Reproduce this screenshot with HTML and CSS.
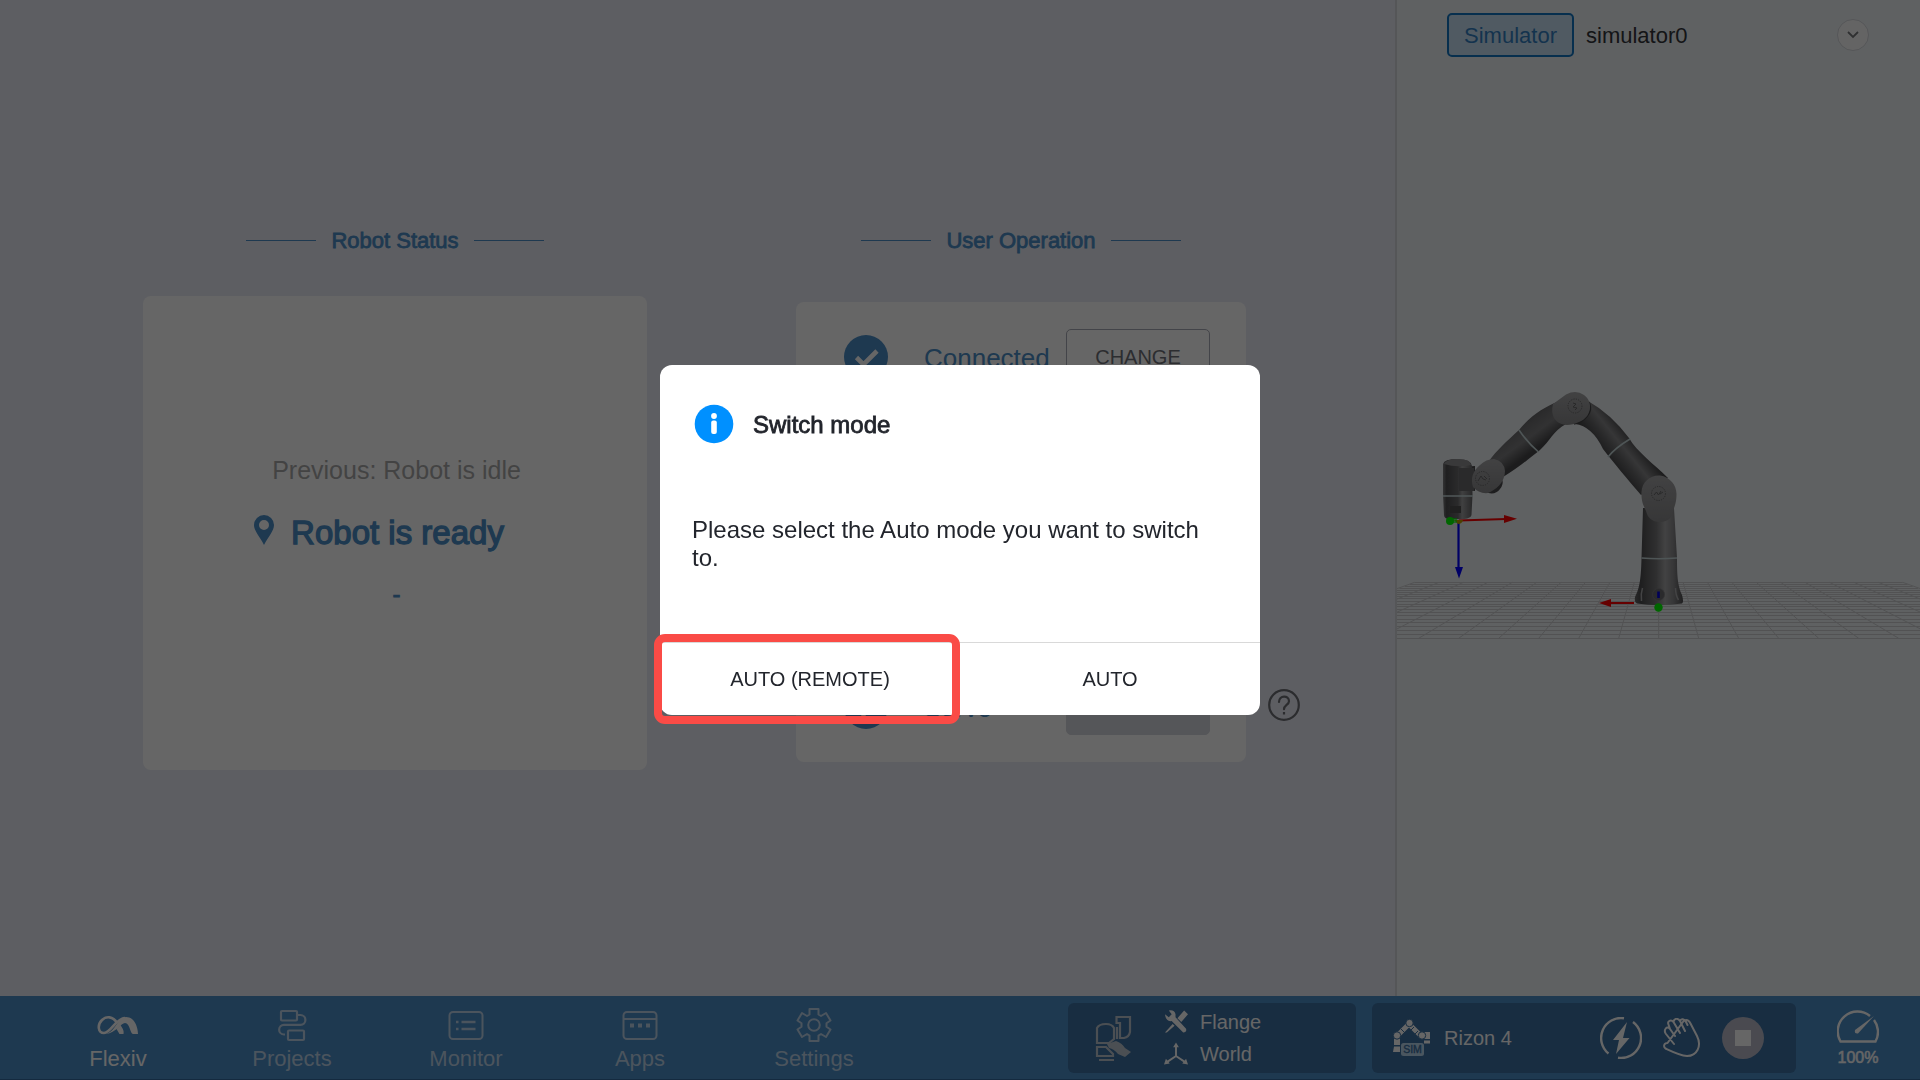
FILE: index.html
```html
<!DOCTYPE html>
<html lang="en">

<head>
  <meta charset="UTF-8">
  <meta name="viewport" content="width=device-width, initial-scale=1.0">
  <title>Flexiv Elements</title>
  <link rel="stylesheet" href="styles.css">
</head>

<body>
  <div class="content">
    <main class="main">
      <section class="status">
        <h2 class="title">Robot Status</h2>
        <div class="card statusCard">
          <p class="previous">Previous: Robot is idle</p>
          <p class="current">
            <svg class="pin" width="20" height="30" viewBox="0 0 20 30">
              <path fill="#4b8ec8" fill-rule="evenodd" d="M10 0a10 10 0 0 1 10 10c0 6-6 12-10 20C6 22 0 16 0 10A10 10 0 0 1 10 0zm0 5a5 5 0 1 0 0 10a5 5 0 0 0 0-10z" />
            </svg>
            <span>Robot is ready</span>
          </p>
          <p class="next">-</p>
        </div>
      </section>
      <section class="operation">
        <h2 class="title">User Operation</h2>
        <div class="card operationCard">
          <div class="row">
            <svg width="44" height="44" viewBox="0 0 44 44">
              <circle cx="22" cy="22" r="22" fill="#4b8ec8" />
              <path d="M12.500 22.500l7 7L33 16" fill="none" stroke="#fff" stroke-width="4.600" />
            </svg>
            <span class="rowText">Connected</span>
            <button type="button" class="rowBtn">CHANGE</button>
          </div>
          <div class="row">
            <svg width="44" height="44" viewBox="0 0 44 44">
              <circle cx="22" cy="22" r="22" fill="#4b8ec8" />
              <path d="M12.500 22.500l7 7L33 16" fill="none" stroke="#fff" stroke-width="4.600" />
            </svg>
            <span class="rowText">Servo</span>
            <button type="button" class="rowBtn disabled" disabled></button>
            <svg class="help" width="32" height="32" viewBox="0 0 32 32" fill="none" stroke="#6c6e74" stroke-width="2.200">
              <circle cx="16" cy="16" r="14.800" />
              <path d="M11 13c0-7 10-7 10-.8c0 3.600-5 4-5 8" stroke-linecap="round" />
              <path d="M16 23v2.500" />
            </svg>
          </div>
        </div>
      </section>
    </main>
    <aside class="side">
      <div class="sideHead">
        <span class="tag">Simulator</span>
        <span class="name">simulator0</span>
        <button type="button" class="fold">
          <svg width="12" height="8" viewBox="0 0 12 8"><path d="M1 1l5 5l5-5" fill="none" stroke="#77797c" stroke-width="1.800" /></svg>
        </button>
      </div>
      <svg class="scene" width="523" height="924" viewBox="1397 72 523 924">
        <defs>
          <linearGradient id="up" x1="0" x2="1" y1="0" y2="0">
            <stop offset="0" stop-color="#646466" />
            <stop offset=".12" stop-color="#4c4c4e" />
            <stop offset=".45" stop-color="#777779" />
            <stop offset=".63" stop-color="#a6a6a8" />
            <stop offset=".8" stop-color="#89898b" />
            <stop offset="1" stop-color="#505052" />
          </linearGradient>
          <linearGradient id="head" x1="0" x2="1" y1="0" y2="0">
            <stop offset="0" stop-color="#808082" />
            <stop offset=".12" stop-color="#505052" />
            <stop offset=".5" stop-color="#69696b" />
            <stop offset=".65" stop-color="#a0a0a2" />
            <stop offset="1" stop-color="#646466" />
          </linearGradient>
          <linearGradient id="armL" gradientUnits="userSpaceOnUse" x1="1512" y1="420" x2="1534" y2="450">
            <stop offset="0" stop-color="#555557" />
            <stop offset=".35" stop-color="#6e6e70" />
            <stop offset=".65" stop-color="#7d7d7f" />
            <stop offset="1" stop-color="#48484a" />
          </linearGradient>
          <linearGradient id="armR" gradientUnits="userSpaceOnUse" x1="1604" y1="455" x2="1630" y2="434">
            <stop offset="0" stop-color="#444446" />
            <stop offset=".35" stop-color="#68686a" />
            <stop offset=".6" stop-color="#88888a" />
            <stop offset="1" stop-color="#48484a" />
          </linearGradient>
          <linearGradient id="cap" x1="0" x2="0" y1="0" y2="1">
            <stop offset="0" stop-color="#a5a5a7" />
            <stop offset="1" stop-color="#89898b" />
          </linearGradient>
        </defs>
        <g id="grid" stroke="#ccced0" stroke-width="1"></g>

        <!-- base and lower column -->
        <path fill="url(#up)" d="M1643 508L1641.500 558C1641 582 1639 589 1635 597Q1634 602 1637 603.500Q1659 607 1682 603.500Q1684 602 1682 595C1678 586 1677 578 1677 558L1674 508z" />
        <path d="M1641.500 558q17 1.500 35.500 0" fill="none" stroke="#c3d4d6" stroke-width="1.600" />
        <path d="M1642.500 588q-2 6-1 13M1675.500 588q0 7 3 12" fill="none" stroke="#a8a8aa" stroke-width="1.500" />
        <circle cx="1658.500" cy="594.500" r="6" fill="#6a6a6e" stroke="#7c7c80" stroke-width=".8" />
        <path d="M1658.500 591.500v6.500" stroke="#0000e0" stroke-width="2.600" />

        <!-- upper right link -->
        <path fill="url(#armR)" d="M1588 401Q1611 414 1629 438C1637 452 1654 464 1668 478L1641 495C1628 480 1614 463 1603 449Q1592 426 1575 424L1565 420z" />
        <path d="M1608 457Q1615 448 1630 439" fill="none" stroke="#c3d4d6" stroke-width="1.600" />
        <path fill="url(#cap)" d="M1660 475.500C1670 477 1676.500 485 1676.500 494C1676.500 505 1673 509 1672 515C1669 524 1651 525 1647 514C1645 507 1641 504 1641.500 492C1642 482 1650 475 1660 475.500z" />
        <circle cx="1658.500" cy="493.500" r="7" fill="none" stroke="#666668" stroke-width="1" stroke-dasharray="1.200 1.200" />
        <path d="M1654 495l2.500-3l2 3l2.500-4M1660 494l3-2" fill="none" stroke="#666668" />

        <!-- upper left link -->
        <path fill="url(#armL)" d="M1557 402C1546 406 1530 416 1519 430C1508 440 1496 451 1489 461L1503 477C1518 468 1530 458 1540 450C1550 441 1553 431 1566 424z" />
        <path d="M1519 430Q1527 442 1538.500 452" fill="none" stroke="#c3d4d6" stroke-width="1.600" />
        <path d="M1589 402q5 10-7 19l-8 3" fill="none" stroke="#444446" stroke-width="1.500" />
        <path fill="url(#cap)" d="M1566 394.500Q1576 389.500 1584 395C1594 402 1591 418 1579 422C1570 426 1560 427 1554 418Q1551 412 1553 404z" />
        <circle cx="1575" cy="406" r="7" fill="none" stroke="#666668" stroke-dasharray="1.200 1.200" />
        <path d="M1573 403l3 1l-3 3l4 1l-2 2" fill="none" stroke="#666668" />

        <!-- wrist -->
        <path fill="#4c4c4e" d="M1458 467L1475 466V491L1458 490zM1485 492q10 4 15-3q4-5 2-10z" />
        <path fill="url(#head)" d="M1443 464Q1444 459 1458 459Q1471 459 1472 466L1472.500 495L1471.500 515Q1471 518 1464 519H1448Q1444 518 1444 515L1443 495z" />
        <path fill="#69696b" d="M1459 468h15v23h-15z" />
        <path fill="#909092" d="M1444 464q2-5 14-5q12 0 13 6q-14 3-27-1z" />
        <path d="M1443 496h30" stroke="#c3d4d6" stroke-width="1.600" />
        <path fill="#505052" d="M1450 506h11v7h-11z" />
        <path fill="url(#cap)" d="M1480 465Q1486 459 1494 459Q1504 461 1505 471C1505 483 1495 490 1488 493Q1479 494 1473 487Q1469 474 1480 465z" />
        <circle cx="1482.500" cy="478.500" r="7" fill="none" stroke="#666668" stroke-dasharray="1.200 1.200" />
        <path d="M1478 481l3-5l2 3l3 1M1484 476l3 3" fill="none" stroke="#666668" />

        <!-- coordinate axes -->
        <path d="M1459 520.500L1506 519" stroke="#f00" stroke-width="2" />
        <path fill="#f00" d="M1504 515l13 3.800l-13 4.200zM1611 599l-12 4l12 4z" />
        <path d="M1610 603h24" stroke="#f00" stroke-width="2" />
        <path d="M1458.500 523v45" stroke="#00f" stroke-width="2.200" />
        <path fill="#00f" d="M1455 567h8l-4 11.500z" />
        <path fill="#c0a000" d="M1454 520h9q-1 4-5 4z" />
        <circle cx="1450" cy="521" r="4" fill="#0f0" />
        <path fill="#0f0" d="M1450 518h7v5h-7z" opacity=".6" />
        <circle cx="1658.500" cy="607.500" r="4.200" fill="#0f0" />
      </svg>
    </aside>
  </div>

  <nav class="nav">
    <ul class="menu">
      <li class="menuItem active">
        <svg width="42" height="34" viewBox="0 0 42 34">
          <path d="M20 15C16 8 9 8 5 12C0 17 1 25 7 25C14 25 19 10 28 10" fill="none" stroke="#fff" stroke-width="2.600" />
          <path d="M13 24C19 20 22 9 29 9C38 9 41 20 41 26H36C33 26 33 15 28 15C24 15 19 25 9 26z" fill="#fff" />
          <path d="M19.500 21l4-4c1 2 4 5 3 9h-4z" fill="#fff" />
        </svg>
        <span>Flexiv</span>
      </li>
      <li class="menuItem">
        <svg width="34" height="34" viewBox="0 0 34 34" fill="none" stroke="#bbd3e8" stroke-width="2.200">
          <rect x="6" y="3" width="16" height="9.500" rx="1" />
          <rect x="13" y="22.500" width="16" height="9.500" rx="1" />
          <path d="M22 7h3.500a4.700 4.700 0 0 1 0 9.800H9a4.800 4.800 0 0 0 0 9.700h1" />
        </svg>
        <span>Projects</span>
      </li>
      <li class="menuItem">
        <svg width="36" height="34" viewBox="0 0 36 34" fill="none" stroke="#bbd3e8" stroke-width="2">
          <rect x="1.500" y="4" width="33" height="27" rx="3.500" />
          <path d="M8 14h2.500M13.500 14h14M8 21h2.500M13.500 21h14" stroke-width="2.400" />
        </svg>
        <span>Monitor</span>
      </li>
      <li class="menuItem">
        <svg width="36" height="34" viewBox="0 0 36 34" fill="none" stroke="#bbd3e8" stroke-width="2">
          <rect x="1.500" y="4" width="33" height="27" rx="3.500" />
          <path d="M2 11h32" />
          <path d="M8 17.500h4M16 17.500h4M24 17.500h4" stroke-width="4" />
        </svg>
        <span>Apps</span>
      </li>
      <li class="menuItem">
        <svg width="36" height="36" viewBox="0 0 36 36" fill="none" stroke="#bbd3e8" stroke-width="2" stroke-linejoin="round">
          <path d="M13.500 2h9v5.500l2.500 1.500l5-3l4.500 7.500l-4 2.800v3.400l4 2.800l-4.500 7.500l-5-3l-2.500 1.500V34h-9v-5.500L11 27l-5 3l-4.500-7.500l4-2.800v-3.400l-4-2.800L6 6l5 3l2.500-1.500z" />
          <circle cx="18" cy="18" r="5.800" />
        </svg>
        <span>Settings</span>
      </li>
    </ul>
    <div class="panel frame">
      <svg width="38" height="46" viewBox="0 0 38 46" fill="none" stroke="#bcc6d0" stroke-width="2.200">
        <path d="M3 28V13q2-4 9-4q6 0 8 4v11l-5 4z" />
        <path d="M22.500 2h13.500v15q-1 5-6 6h-4V8h-3.500z" />
        <path d="M23 12v12" />
        <path d="M3 32h9l7 7v2H3zM5 45h15" />
        <path d="M13 29l9-3q6 2 9 7l6 4l-6 5l-7-3q-4-5-9-6z" fill="#bcc6d0" stroke="none" />
      </svg>
      <ul class="frameList">
        <li class="frameItem">
          <svg width="24" height="24" viewBox="0 0 25 24">
            <path d="M1 4l4 3l3-3l-3-4q6-1 7 4v3l11 12q1 4-3 4L8 11q-6 1-7-7z" fill="#fff" />
            <path d="M14 8l7-8l4 4l-7 8zM9 14l2 2l-8 7H1z" fill="#fff" />
          </svg>
          <span>Flange</span>
        </li>
        <li class="frameItem">
          <svg width="24" height="24" viewBox="0 0 25 24">
            <path d="M12.500 3v11L3 20.500M12.500 14l9.500 6.500" fill="none" stroke="#fff" stroke-width="2" />
            <path d="M9.500 5l3-5l3 5zM0 23l2-6l4 5zM25 23l-2-6l-4 5z" fill="#fff" />
          </svg>
          <span>World</span>
        </li>
      </ul>
    </div>
    <div class="panel robot">
      <svg width="40" height="38" viewBox="0 0 40 38">
        <path d="M5 17L17 5l12 12" fill="none" stroke="#fff" stroke-width="5" />
        <path d="M2 19h6v7H2zM2 27.500h6V33H1zM32 13h6v7h-6zM32 21.500h6v3h-6z" fill="#fff" />
        <path d="M9 10l4 4M22 8l-4 4M26 12l-4 4" stroke="#3c70a2" />
        <g fill="#fff" stroke="#3c70a2" stroke-width="1">
          <circle cx="17.500" cy="4" r="3.700" />
          <circle cx="5" cy="16.500" r="3.700" />
          <circle cx="30" cy="16.500" r="3.700" />
        </g>
        <rect x="9" y="24" width="23" height="13" rx="2.500" fill="#b8d6ee" />
        <text class="sim" x="20.500" y="34.200" text-anchor="middle">SIM</text>
      </svg>
      <span class="robotName">Rizon 4</span>
      <svg class="power" width="42" height="42" viewBox="0 0 42 42" fill="none" stroke="#fff" stroke-width="2.400">
        <path d="M24 1.200A20 20 0 0 0 8.500 36.500M33 5A20 20 0 0 1 18 40.800" />
        <path d="M27 5L13 23h6L16 37L29.500 21H23z" fill="#fff" stroke="none" />
      </svg>
      <svg class="hand" width="38" height="40" viewBox="0 0 38 40" fill="none" stroke="#fff" stroke-width="2" stroke-linecap="round" stroke-linejoin="round">
        <path d="M11 26L3 16C0 12 4 7 7 11L12 18M7 11L5.500 6.500C4 3 8 1 10.500 4L17 15M10.500 4C11 0 15 0 17 3L22 13M17 3C18 0 21.500 1 23 4L24.500 7M21 2.500C24 1 26 2.500 27.500 5.500L34 18C39 28 34 38 24 38C17 37.500 12 35 2.500 30.500C0 28.500 1 25 4.500 25z" />
      </svg>
      <svg class="stop" width="42" height="42" viewBox="0 0 42 42">
        <circle cx="21" cy="21" r="21" fill="#b8bac8" />
        <rect x="13" y="13" width="16" height="16" fill="#fff" />
      </svg>
    </div>
    <div class="speed">
      <svg width="42" height="34" viewBox="0 0 42 34" fill="none" stroke="#fff" stroke-width="2.400">
        <path d="M33 6A19.800 19.800 0 0 0 3.500 31.500h35A19.800 19.800 0 0 0 37 10" />
        <path d="M37 6L18 20q-1 4 3 3.500z" fill="#fff" stroke="none" />
      </svg>
      <span>100%</span>
    </div>
  </nav>

  <div class="mask">
    <div class="dialog">
      <div class="dialogHead">
        <svg width="40" height="40" viewBox="0 0 40 40">
          <circle cx="20" cy="20" r="19.300" fill="#0090ff" />
          <circle cx="20" cy="12" r="2.900" fill="#fff" />
          <rect x="17.200" y="16.500" width="5.600" height="13.500" rx="2" fill="#fff" />
        </svg>
        <h3 class="dialogTitle">Switch mode</h3>
      </div>
      <p class="dialogText">Please select the Auto mode you want to switch to.</p>
      <div class="dialogFoot">
        <button type="button" class="dialogBtn">AUTO (REMOTE)</button>
        <button type="button" class="dialogBtn">AUTO</button>
      </div>
      <div class="marker"></div>
    </div>
  </div>

  <script>
    var grid = document.getElementById('grid');
    var centerX = 1658.7;
    var horizon = 494.7;
    var top1 = 582.3, bottom1 = 638.3;//far and near edge of the floor

    var addLine = function (x1, y1, x2, y2) {
      var line = document.createElementNS('http://www.w3.org/2000/svg', 'line');
      line.setAttribute('x1', x1);
      line.setAttribute('y1', y1);
      line.setAttribute('x2', x2);
      line.setAttribute('y2', y2);
      grid.appendChild(line);
    }

    for (let i = 0; i <= 20; i++) {
      // depth runs evenly in 1 / distance from the horizon
      var far = 1 / (top1 - horizon);
      var near = 1 / (bottom1 - horizon);
      var depth = 1 / (far + (near - far) * i / 20);
      var y = Math.round(horizon + depth) + 0.5;
      var half = depth * 2.786;
      addLine(centerX - half, y, centerX + half, y);
      addLine(centerX + (i - 10) * 24.4, top1, centerX + (i - 10) * 40, bottom1);
    }
  </script>
</body>

</html>
```
FILE: styles.css
```css
* {
  margin: 0;
  padding: 0;
  box-sizing: border-box;
}

body {
  width: 1920px;
  height: 1080px;
  overflow: hidden;
  display: flex;
  flex-direction: column;
  font-family: "Liberation Sans", Arial, sans-serif;
  color: #22252c;
}

ul {
  list-style: none;
}

svg {
  display: block;
  flex-shrink: 0;
}

button {
  font-family: inherit;
  background: none;
  border: none;
}

.content {
  height: 996px;
  display: flex;
}

.main {
  width: 1397px;
  padding: 226px 0 0 143px;
  display: flex;
  gap: 149px;
  background-color: #e9ebf5;
  border-right: 2px solid #d4d6dc;
}

.status {
  width: 504px;
}

.operation {
  width: 450px;
}

.title {
  height: 29px;
  line-height: 30px;
  display: flex;
  align-items: center;
  justify-content: center;
  gap: 15px;
  font-size: 22px;
  font-weight: normal;
  color: #4b8ec8;
  -webkit-text-stroke: 0.8px #4b8ec8;
}

.title::before,
.title::after {
  content: "";
  width: 70px;
  height: 1px;
  background-color: #4b8ec8;
}

.card {
  background-color: #fff;
  border-radius: 8px;
}

.statusCard {
  height: 474px;
  margin-top: 41px;
  padding-top: 156px;
  text-align: center;
}

.previous {
  height: 36px;
  line-height: 36px;
  font-size: 25px;
  color: #a9a9a9;
  padding-left: 3px;
}

.current {
  height: 44px;
  margin-top: 22px;
  padding-right: 32px;
  display: flex;
  align-items: center;
  justify-content: center;
  gap: 17px;
  font-size: 33px;
  color: #4b8ec8;
  -webkit-text-stroke: 1.3px #4b8ec8;
}

.current span {
  line-height: 44px;
  padding-top: 1px;
}

.pin {
  margin-bottom: 4px;
}

.next {
  height: 30px;
  line-height: 30px;
  margin-top: 25px;
  padding-left: 3px;
  font-size: 24px;
  color: #4b8ec8;
  -webkit-text-stroke: 0.8px #4b8ec8;
}

.operationCard {
  height: 460px;
  margin-top: 47px;
  padding: 27px 36px 27px 48px;
  display: flex;
  flex-direction: column;
  justify-content: space-between;
}

.row {
  height: 56px;
  display: flex;
  align-items: center;
  position: relative;
}

.rowText {
  width: 142px;
  margin-left: 36px;
  padding-top: 2px;
  font-size: 26px;
  color: #4b8ec8;
}

.rowBtn {
  width: 144px;
  height: 56px;
  border: 1px solid #a9abb6;
  border-radius: 5px;
  font-size: 20px;
  color: #6e7078;
}

.rowBtn.disabled {
  background-color: #d4d6de;
  border-color: #d4d6de;
}

.help {
  position: absolute;
  right: -90px;
  top: 10px;
}

.side {
  width: 523px;
  background-color: #eef2f5;
}

.sideHead {
  height: 72px;
  padding: 13px 51px 0 50px;
  display: flex;
  align-items: flex-start;
}

.tag {
  width: 127px;
  height: 44px;
  line-height: 42px;
  text-align: center;
  font-size: 22px;
  color: #3480c2;
  background-color: #c8e2f6;
  border: 2px solid #1276c2;
  border-radius: 5px;
}

.name {
  flex: 1;
  line-height: 46px;
  margin-left: 12px;
  font-size: 22px;
  color: #33353a;
}

.fold {
  width: 32px;
  height: 32px;
  margin-top: 6px;
  display: flex;
  align-items: center;
  justify-content: center;
  border: 1px solid #d4d7dc;
  border-radius: 50%;
  background-color: #fbfbfb;
}

.nav {
  height: 84px;
  padding-left: 31px;
  display: flex;
  background-color: #4b8ec8;
  border-bottom: 1px solid #33699e;
}

.menu {
  width: 1037px;
  display: flex;
}

.menuItem {
  width: 174px;
  padding-top: 11px;
  display: flex;
  flex-direction: column;
  align-items: center;
  font-size: 22px;
  color: #bbd3e8;
}

.menuItem svg {
  height: 36px;
}

.menuItem span {
  line-height: 32px;
}

.menuItem.active {
  color: #fff;
}

.panel {
  height: 70px;
  margin-top: 7px;
  display: flex;
  align-items: center;
  background-color: #3c70a2;
  border-radius: 6px;
  color: #fff;
  font-size: 20px;
}

.frame {
  width: 288px;
  padding-left: 26px;
}

.frameList {
  margin-left: 32px;
}

.frameItem {
  height: 32px;
  display: flex;
  align-items: center;
  gap: 12px;
}

.robot {
  width: 424px;
  margin-left: 16px;
  padding-left: 20px;
}

.sim {
  font-size: 10.5px;
  fill: #3c70a2;
  stroke: #3c70a2;
  stroke-width: 0.4px;
}

.robotName {
  width: 156px;
  margin-left: 12px;
}

.hand {
  margin-left: 21px;
}

.stop {
  margin-left: 21px;
}

.speed {
  flex: 1;
  padding-top: 14px;
  display: flex;
  flex-direction: column;
  align-items: center;
  color: #fff;
  font-size: 16px;
  -webkit-text-stroke: 0.5px #fff;
}

.speed span {
  margin-top: 5px;
}

.mask {
  position: fixed;
  inset: 0;
  display: flex;
  align-items: center;
  justify-content: center;
  background-color: rgba(0, 0, 0, 0.6);
}

.dialog {
  width: 600px;
  height: 350px;
  position: relative;
  display: flex;
  flex-direction: column;
  background-color: #fff;
  border-radius: 12px;
}

.dialogHead {
  padding: 39px 34px 0;
  display: flex;
  align-items: center;
  gap: 19px;
}

.dialogTitle {
  padding-top: 1px;
  font-size: 24px;
  font-weight: normal;
  -webkit-text-stroke: 0.8px #22252c;
}

.dialogText {
  flex: 1;
  padding: 72px 32px 0;
  font-size: 24px;
  line-height: 28px;
}

.dialogFoot {
  height: 73px;
  display: flex;
  border-top: 1px solid #d9d9d9;
}

.dialogBtn {
  flex: 1;
  font-size: 20px;
  color: #22252c;
}

/* highlight frame around the left button */
.marker {
  position: absolute;
  left: -6px;
  top: 269px;
  width: 306px;
  height: 90px;
  border: 8px solid #fa4b46;
  border-radius: 11px;
}
```
